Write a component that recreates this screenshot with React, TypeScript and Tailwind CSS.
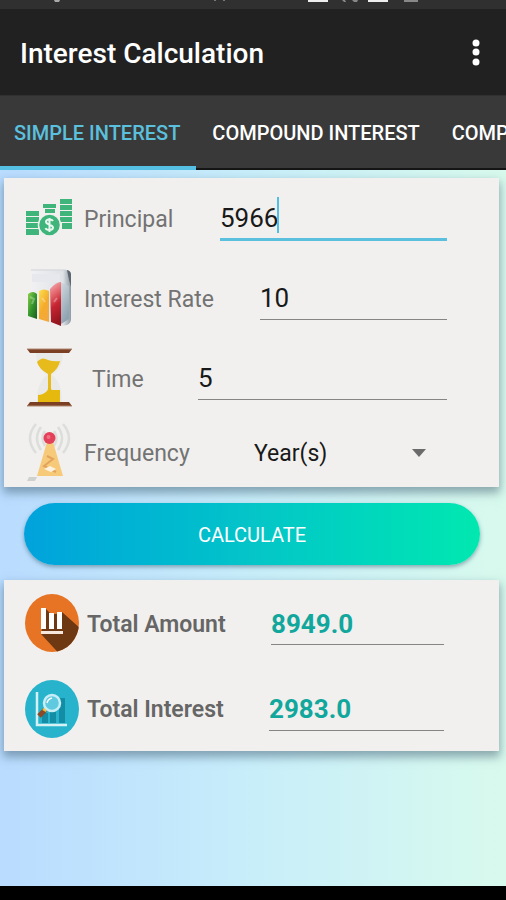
import { useState } from 'react'
import type { ReactNode } from 'react'

const tabs = ['SIMPLE INTEREST', 'COMPOUND INTEREST', 'COMPARE']

function CoinsIcon() {
  return (
    <svg viewBox="0 0 48 60" className="h-[60px] w-12 shrink-0" aria-hidden="true">
      <g fill="#3fb57c">
        <path d="M0 23h13v5H0zM0 29h13v5H0zM0 35h13v5H0zM0 41h13v6H0z" />
        <path d="M17 16h13v4H17zM19 21h10v4H19z" />
        <path d="M34 11h12v5H34zM34 17h12v5H34zM34 23h12v5H34zM34 29h12v5H34zM36 35h10v6H36z" />
      </g>
      <circle cx="23.500" cy="37" r="11" fill="#3fb57c" stroke="#f1f0ee" strokeWidth="1.500" />
      <path
        d="M27 33c-1-2-7-2.500-7 .8 0 3.400 7 2.400 7 5.800 0 3.200-6.500 3-7.500.6M23.500 30v14"
        fill="none"
        stroke="#e9f7ef"
        strokeWidth="2"
      />
    </svg>
  )
}

function BarsIcon() {
  return (
    <svg viewBox="0 0 48 60" className="h-[60px] w-12 shrink-0" aria-hidden="true">
      <defs>
        <linearGradient id="panel" x1="0" x2="1">
          <stop offset="0" stopColor="#f1f1f3" />
          <stop offset="0.8" stopColor="#dfe2e6" />
          <stop offset="1" stopColor="#8d9ba4" />
        </linearGradient>
        <linearGradient id="side" x1="0" y1="0" x2="0.4" y2="1">
          <stop offset="0" stopColor="#d5dbe0" />
          <stop offset="1" stopColor="#8fa3b1" />
        </linearGradient>
        <linearGradient id="green" x1="0" x2="1" y2="1">
          <stop offset="0" stopColor="#8fd04a" />
          <stop offset="0.5" stopColor="#35962d" />
          <stop offset="1" stopColor="#1c5a1d" />
        </linearGradient>
        <linearGradient id="amber" x1="0" x2="0.6" y2="1">
          <stop offset="0" stopColor="#fae04e" />
          <stop offset="0.6" stopColor="#f5ab2c" />
          <stop offset="1" stopColor="#f3a83c" />
        </linearGradient>
        <linearGradient id="red" x1="0" y1="0" x2="0.2" y2="1">
          <stop offset="0" stopColor="#f6b5b8" />
          <stop offset="0.35" stopColor="#e2626a" />
          <stop offset="0.6" stopColor="#c62631" />
          <stop offset="1" stopColor="#96161f" />
        </linearGradient>
      </defs>
      <path d="M5 2h35q5 0 5 5v44q0 4-4 6l-6 1L5 48z" fill="url(#panel)" />
      <path d="M5 2h35" stroke="#d0d3d8" strokeWidth="1" />
      <path d="M41 2q4 1 4 5v12l-2-7z" fill="#5b666e" />
      <path d="M6 6h28v8H6z" fill="#e7e8ee" />
      <path d="M34 14l9 4v33l-8 5z" fill="url(#side)" />
      <path d="M2 26q5-4 9 0v25L2 48z" fill="url(#green)" />
      <path d="M13 23q5-3 10 0v31l-10-3z" fill="url(#amber)" />
      <path d="M24 21q6-7 11-7v44l-10-4z" fill="url(#red)" />
      <path d="M4 29l4 2-2 5M16 30l3 4M28 34l3-4" stroke="#fff" strokeOpacity="0.3" strokeWidth="2" fill="none" />
    </svg>
  )
}

function HourglassIcon() {
  return (
    <svg viewBox="0 0 48 60" className="h-[60px] w-12 shrink-0" aria-hidden="true">
      <path d="M10 4h27c0 14-5 18-11 23 7 6 10 13 10 27H11c0-14 3-21 10-27C15 22 10 18 10 4z" fill="#e9eae8" />
      <path d="M11 14q5-6 11-2 6 2 12 1-1 7-9 13v19h-3V26Q13 21 11 14z" fill="#e6bb1b" />
      <path d="M12 54V47q5 0 9-4l2-4 3 3h8v12z" fill="#e6b90f" />
      <path d="M1 1h45l-3 4H4z" fill="#7b3f24" />
      <path d="M4 54h39l3 4H1z" fill="#7b3f24" />
      <path d="M1 1h45M1 58h45" stroke="#b08a70" strokeWidth="1" />
    </svg>
  )
}

function AntennaIcon() {
  return (
    <svg viewBox="0 0 48 60" className="h-[60px] w-12 shrink-0" aria-hidden="true">
      <g fill="none" stroke="#dcdedb" strokeWidth="2.500">
        <path d="M10 1Q-2 15 10 30M15 4q-8 11 0 23M19 8q-5 7 0 15" />
        <path d="M37 1q12 14 0 29M32 4q8 11 0 23M28 8q5 7 0 15" />
      </g>
      <path d="M21 19h6l10 34H11z" fill="#f6ca78" />
      <path d="m21 33 6 3-9 7 12 6" fill="none" stroke="#e2a45c" strokeWidth="2" />
      <path d="m18 46 6-3 6 3-5 3z" fill="#fdf1e0" />
      <circle cx="23.500" cy="15" r="6" fill="#e4405a" />
      <circle cx="22.500" cy="14" r="2" fill="#ee7184" />
      <path d="M3 54h8l-2 4H1z" fill="#cfd1cf" />
    </svg>
  )
}

function AmountIcon() {
  return (
    <svg viewBox="0 0 54 58" className="h-[58px] w-[54px] shrink-0" aria-hidden="true">
      <defs>
        <clipPath id="amount-disc">
          <ellipse cx="27" cy="29" rx="27" ry="29" />
        </clipPath>
      </defs>
      <g clipPath="url(#amount-disc)">
        <path d="M0 0h54v58H0z" fill="#e67424" />
        <path d="m21 15 5 5h5l6-2 20 18v30H40L16 40z" fill="#6e3812" />
      </g>
      <g fill="#fff">
        <path d="M16 14h5v21h-5zM24 19h5v16h-5zM32 18h5v17h-5z" />
        <path d="M16 37h22v3H16z" fill="#f6e7dc" />
      </g>
    </svg>
  )
}

function InterestIcon() {
  return (
    <svg viewBox="0 0 54 58" className="h-[58px] w-[54px] shrink-0" aria-hidden="true">
      <ellipse cx="27" cy="29" rx="27" ry="29" fill="#27b3cb" />
      <path d="M17 33h6v10h-6zM25 31h6v12h-6zM34 18h6v25h-6z" fill="#138ca6" />
      <path d="M12 12v33h30" fill="none" stroke="#d5f1f6" strokeWidth="2.500" />
      <path d="m20 30-6 6" stroke="#8a4a27" strokeWidth="5" />
      <path d="m21 28-2 3" stroke="#efbd45" strokeWidth="4" />
      <circle cx="27" cy="23" r="8" fill="#5fc9e0" stroke="#c8eef5" strokeWidth="2.500" />
      <path d="M22 23q1-4 5-5" stroke="#fff" strokeWidth="1.500" fill="none" />
    </svg>
  )
}

function Card({ children }: { children: ReactNode }) {
  return (
    <section className="mr-[7px] ml-1 bg-[#f1f0ee] shadow-[0_5px_9px_1px_rgba(60,90,110,0.5)]">
      {children}
    </section>
  )
}

export default function App() {
  const [principal, setPrincipal] = useState('5966')
  const [rate, setRate] = useState('10')
  const [time, setTime] = useState('5')

  return (
    <div className="flex min-h-screen flex-col overflow-hidden bg-gradient-to-r from-[#b9dcff] via-[#c8eefa] to-[#d8faed] font-['Roboto','Liberation_Sans',sans-serif]">
      <div className="h-[9px] bg-[#303030]">
        <svg viewBox="0 0 506 9" className="h-[9px] w-full" aria-hidden="true">
          <path d="M54 0h6l-1 2h-4z" fill="#aaa" />
          <path d="M214 0h2v1h-2zM223 0h2v1h-2z" fill="#777" />
          <path d="M308 0h20v2h-20zM368 0h20v2h-20z" fill="#eee" />
          <path d="M342 0h3l1 2h-2zM352 0h6l-1 2h-3zM404 0h14v2h-14z" fill="#888" />
        </svg>
      </div>

      <header className="flex h-[86px] items-center justify-between bg-[#212121] pr-[22px] pl-5 text-white">
        <h1 className="pt-1 text-[28px] font-medium">Interest Calculation</h1>
        <button type="button" aria-label="More options">
          <svg viewBox="0 0 16 28" className="h-7 w-4" fill="#fff" aria-hidden="true">
            <circle cx="8" cy="5" r="3.500" />
            <circle cx="8" cy="14" r="3.500" />
            <circle cx="8" cy="24" r="3.500" />
          </svg>
        </button>
      </header>

      <nav className="flex h-[75px] overflow-hidden border-t border-[#303030] bg-[#393939] text-[20px] font-medium whitespace-nowrap text-white">
        {tabs.map((tab, i) => (
          <button
            key={tab}
            type="button"
            className={
              i === 0
                ? 'shrink-0 border-b-4 border-[#55c0e4] pt-1 pr-4 pl-[14px] text-[#5bc0de]'
                : 'shrink-0 grow border-b-2 border-[#151515] px-4 pt-[2px]'
            }
          >
            {tab}
          </button>
        ))}
      </nav>

      <main className="flex-1 pt-2">
        <Card>
          <div className="flex h-20 items-center pr-[52px] pl-[22px]">
            <CoinsIcon />
            <label htmlFor="principal" className="ml-[10px] w-[136px] pt-1 text-[23px] text-[#737373]">
              Principal
            </label>
            <div className="relative min-w-0 flex-1">
              <input
                id="principal"
                value={principal}
                onChange={(e) => setPrincipal(e.target.value)}
                inputMode="decimal"
                className="block h-[46px] w-full border-b-[3px] border-[#5bc0de] bg-transparent pt-[2px] text-[26px] text-[#191919] outline-none"
              />
              <span className="absolute top-[2px] left-[57px] h-9 w-[2px] bg-[#4fbfe3]" />
            </div>
          </div>

          <div className="flex h-20 items-center pr-[52px] pl-[22px]">
            <BarsIcon />
            <label htmlFor="rate" className="ml-[10px] w-[176px] pt-1 text-[23px] text-[#737373]">
              Interest Rate
            </label>
            <input
              id="rate"
              value={rate}
              onChange={(e) => setRate(e.target.value)}
              inputMode="decimal"
              className="h-11 min-w-0 flex-1 border-b border-[#858585] bg-transparent text-[26px] text-[#191919] outline-none"
            />
          </div>

          <div className="flex h-20 items-center pr-[52px] pl-[22px]">
            <HourglassIcon />
            <label htmlFor="time" className="ml-[18px] w-[106px] pt-1 text-[23px] text-[#737373]">
              Time
            </label>
            <input
              id="time"
              value={time}
              onChange={(e) => setTime(e.target.value)}
              inputMode="numeric"
              className="h-11 min-w-0 flex-1 border-b border-[#858585] bg-transparent text-[26px] text-[#191919] outline-none"
            />
          </div>

          <div className="flex h-[69px] items-center pr-[52px] pl-[22px]">
            <AntennaIcon />
            <label htmlFor="frequency" className="ml-[10px] w-[170px] pt-1 text-[23px] text-[#737373]">
              Frequency
            </label>
            <div className="relative min-w-0 flex-1">
              <select
                id="frequency"
                className="h-11 w-full appearance-none bg-transparent pt-1 text-[23px] text-[#191919] outline-none"
              >
                <option>Year(s)</option>
                <option>Month(s)</option>
              </select>
              <svg
                viewBox="0 0 14 8"
                className="pointer-events-none absolute top-[18px] right-[21px] h-2 w-[14px]"
                fill="#6b6b6b"
                aria-hidden="true"
              >
                <path d="M0 0h14L7 8z" />
              </svg>
            </div>
          </div>
        </Card>

        <div className="pt-4 pr-[26px] pb-[15px] pl-6">
          <button
            type="button"
            className="h-[62px] w-full rounded-full bg-gradient-to-r from-[#02a2dc] via-[#05c5c8] to-[#02e8b0] pt-[2px] text-[20px] text-white shadow-[0_2px_4px_rgba(50,90,110,0.5)]"
          >
            CALCULATE
          </button>
        </div>

        <Card>
          <div className="flex h-[86px] items-center pr-[55px] pl-[21px]">
            <AmountIcon />
            <label htmlFor="total-amount" className="ml-2 w-[184px] pt-1 text-[23px] font-semibold text-[#666]">
              Total Amount
            </label>
            <input
              id="total-amount"
              readOnly
              value="8949.0"
              className="h-11 min-w-0 flex-1 border-b border-[#858585] bg-transparent pt-[2px] text-[26px] font-bold text-[#11a79d] outline-none"
            />
          </div>
          <div className="flex h-[85px] items-center pr-[55px] pl-[21px]">
            <InterestIcon />
            <label htmlFor="total-interest" className="ml-2 w-[182px] pt-1 text-[23px] font-semibold text-[#666]">
              Total Interest
            </label>
            <input
              id="total-interest"
              readOnly
              value="2983.0"
              className="h-11 min-w-0 flex-1 border-b border-[#858585] bg-transparent pt-[2px] text-[26px] font-bold text-[#11a79d] outline-none"
            />
          </div>
        </Card>
      </main>

      <footer className="h-[14px] bg-black" />
    </div>
  )
}
